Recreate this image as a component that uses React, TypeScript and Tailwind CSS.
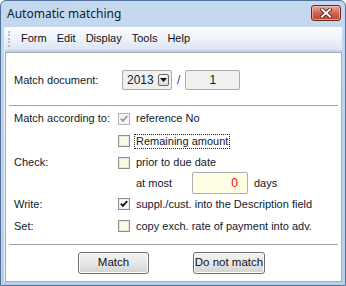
import React from "react";

const body = { fontFamily: '"Liberation Sans", Arial, sans-serif' };

function Check({ state }: { state: "off" | "on" | "dis" }) {
  const border = state === "dis" ? "border-[#b4b4b4]" : "border-[#8e8f8f]";
  const inner =
    state === "off"
      ? "bg-[#fbfadf] border-[#e6e6e6]"
      : state === "dis"
      ? "bg-[#f4f4f4] border-[#f4f4f4]"
      : "bg-white border-[#f0f0f0]";
  return (
    <div className={`w-[12px] h-[12px] border ${border} bg-white flex items-center justify-center shrink-0`}>
      <div className={`w-[10px] h-[10px] border ${inner} relative`}>
        {state !== "off" && (
          <svg width="10" height="10" viewBox="0 0 10 10" className="absolute -left-px -top-px">
            <path
              d="M1.8 4.6 L3.9 6.8 L8.2 2.2"
              fill="none"
              stroke={state === "dis" ? "#9a9a9a" : "#111"}
              strokeWidth="1.9"
            />
          </svg>
        )}
      </div>
    </div>
  );
}

function Row({
  label,
  h,
  children,
}: {
  label?: string;
  h: string;
  children: React.ReactNode;
}) {
  return (
    <div className={`flex items-center ${h}`}>
      <div className="w-[104px] shrink-0">{label}</div>
      {children}
    </div>
  );
}

function Btn({ children, w }: { children: React.ReactNode; w: string }) {
  return (
    <div
      className={`${w} h-[22px] rounded-[3px] border border-[#707070] flex items-center justify-center whitespace-nowrap text-[11.5px] text-[#111] bg-gradient-to-b from-[#f2f2f2] via-[#e8e8e8] to-[#d2d2d2] shadow-[inset_0_0_0_1px_#fcfcfc]`}
    >
      {children}
    </div>
  );
}

export default function App() {
  return (
    <div
      className="w-[346px] h-[286px] border border-[#52719a] rounded-t-[6px] bg-gradient-to-b from-[#c4d8ef] to-[#b8d0ea] flex flex-col overflow-hidden"
      style={body}
    >
      {/* Title bar */}
      <div className="h-[26px] flex items-start shrink-0">
        <div
          className="pl-[6px] pt-[4px] text-[12px] text-[#0d1d33] leading-[18px]"
          style={{ fontFamily: '"Noto Sans", "Liberation Sans", sans-serif' }}
        >
          Automatic matching
        </div>
        <div className="ml-auto mr-[4px] mt-[4px] w-[30px] h-[16px] rounded-[3px] border border-[#6a2a22] bg-gradient-to-b from-[#e9a99b] via-[#cf6555] to-[#c0402c] flex items-center justify-center shadow-[inset_0_0_0_1px_rgba(255,210,200,0.6)]">
          <svg width="12" height="10" viewBox="0 0 12 10">
            <path
              d="M2 1.5 L10 8.5 M10 1.5 L2 8.5"
              stroke="#4a1b14"
              strokeWidth="3.6"
              strokeLinecap="square"
            />
            <path
              d="M2 1.5 L10 8.5 M10 1.5 L2 8.5"
              stroke="#fff"
              strokeWidth="2"
              strokeLinecap="square"
            />
          </svg>
        </div>
      </div>

      {/* Client */}
      <div className="mx-[3px] mb-[3px] flex-1 flex flex-col border-l border-[#e8f0f8]">
        {/* Menu bar */}
        <div className="h-[24px] shrink-0 flex items-center bg-gradient-to-b from-[#fbfcfe] via-[#eef2fa] to-[#dce5f3] border-b border-[#c6d3e6] text-[11px] text-[#111]">
          <div className="ml-[3px] w-[3px] h-[18px] flex flex-col justify-between py-[1px]">
            {Array.from({ length: 5 }).map((_, i) => (
              <div key={i} className="w-[2px] h-[2px] bg-[#b4bdcc]" />
            ))}
          </div>
          <div className="flex ml-[10px] gap-[10px]">
            <span>Form</span>
            <span>Edit</span>
            <span>Display</span>
            <span>Tools</span>
            <span>Help</span>
          </div>
        </div>

        {/* Panel */}
        <div className="flex-1 bg-white border border-[#a6acb4] mt-[1px] flex flex-col text-[11px] text-[#12192a]">
          <div className="flex items-center h-[20px] mt-[17px] pl-[8px]">
            <div className="w-[108px] shrink-0">Match document:</div>
            <div className="w-[50px] h-[20px] border border-[#acacac] rounded-[2px] bg-[#f0f0f0] flex items-center pl-[4px] pr-[2px]">
              <span className="text-[12px]">2013</span>
              <div className="ml-auto w-[11px] h-[12px] border border-[#6a6a6a] rounded-[2px] bg-gradient-to-b from-[#f6f6f6] to-[#dcdcdc] flex items-center justify-center">
                <svg width="7" height="4" viewBox="0 0 7 4">
                  <path d="M0 0 H7 L3.5 4 Z" fill="#111" />
                </svg>
              </div>
            </div>
            <span className="mx-[5px] text-[12px] text-[#1f3f7a]">/</span>
            <div className="w-[55px] h-[20px] border border-[#acacac] rounded-[2px] bg-[#f0f0f0] flex items-center justify-center text-[12px]">
              1
            </div>
          </div>

          <div className="h-px bg-[#a0a0a0] mx-[3px] mt-[15px]" />

          <div className="pl-[8px] flex flex-col mt-[1px]">
            <Row label="Match according to:" h="h-[23px]">
              <Check state="dis" />
              <span className="ml-[6px]">reference No</span>
            </Row>
            <Row h="h-[22px]">
              <Check state="off" />
              <span className="ml-[5px] px-[1px] outline outline-1 outline-dotted outline-[#222] leading-[13px]">
                Remaining amount
              </span>
            </Row>
            <Row label="Check:" h="h-[21px]">
              <Check state="off" />
              <span className="ml-[6px]">prior to due date</span>
            </Row>
            <Row h="h-[20px]">
              <div className="w-[18px] shrink-0" />
              <span className="w-[56px] shrink-0">at most</span>
              <div className="w-[56px] h-[22px] border border-[#abadb3] rounded-[2px] bg-[#ffffe6] flex items-center justify-end pr-[9px] text-[12px] text-[#ff0000]">
                0
              </div>
              <span className="ml-[6px]">days</span>
            </Row>
            <Row label="Write:" h="h-[22px]">
              <Check state="on" />
              <span className="ml-[6px]">suppl./cust. into the Description field</span>
            </Row>
            <Row label="Set:" h="h-[22px]">
              <Check state="off" />
              <span className="ml-[6px]">copy exch. rate of payment into adv.</span>
            </Row>
          </div>

          <div className="h-px bg-[#a0a0a0] mx-[3px] mt-[7px]" />

          <div className="flex pl-[72px] gap-[44px] mt-[7px]">
            <Btn w="w-[71px]">Match</Btn>
            <Btn w="w-[72px]">Do not match</Btn>
          </div>
        </div>
      </div>
    </div>
  );
}
